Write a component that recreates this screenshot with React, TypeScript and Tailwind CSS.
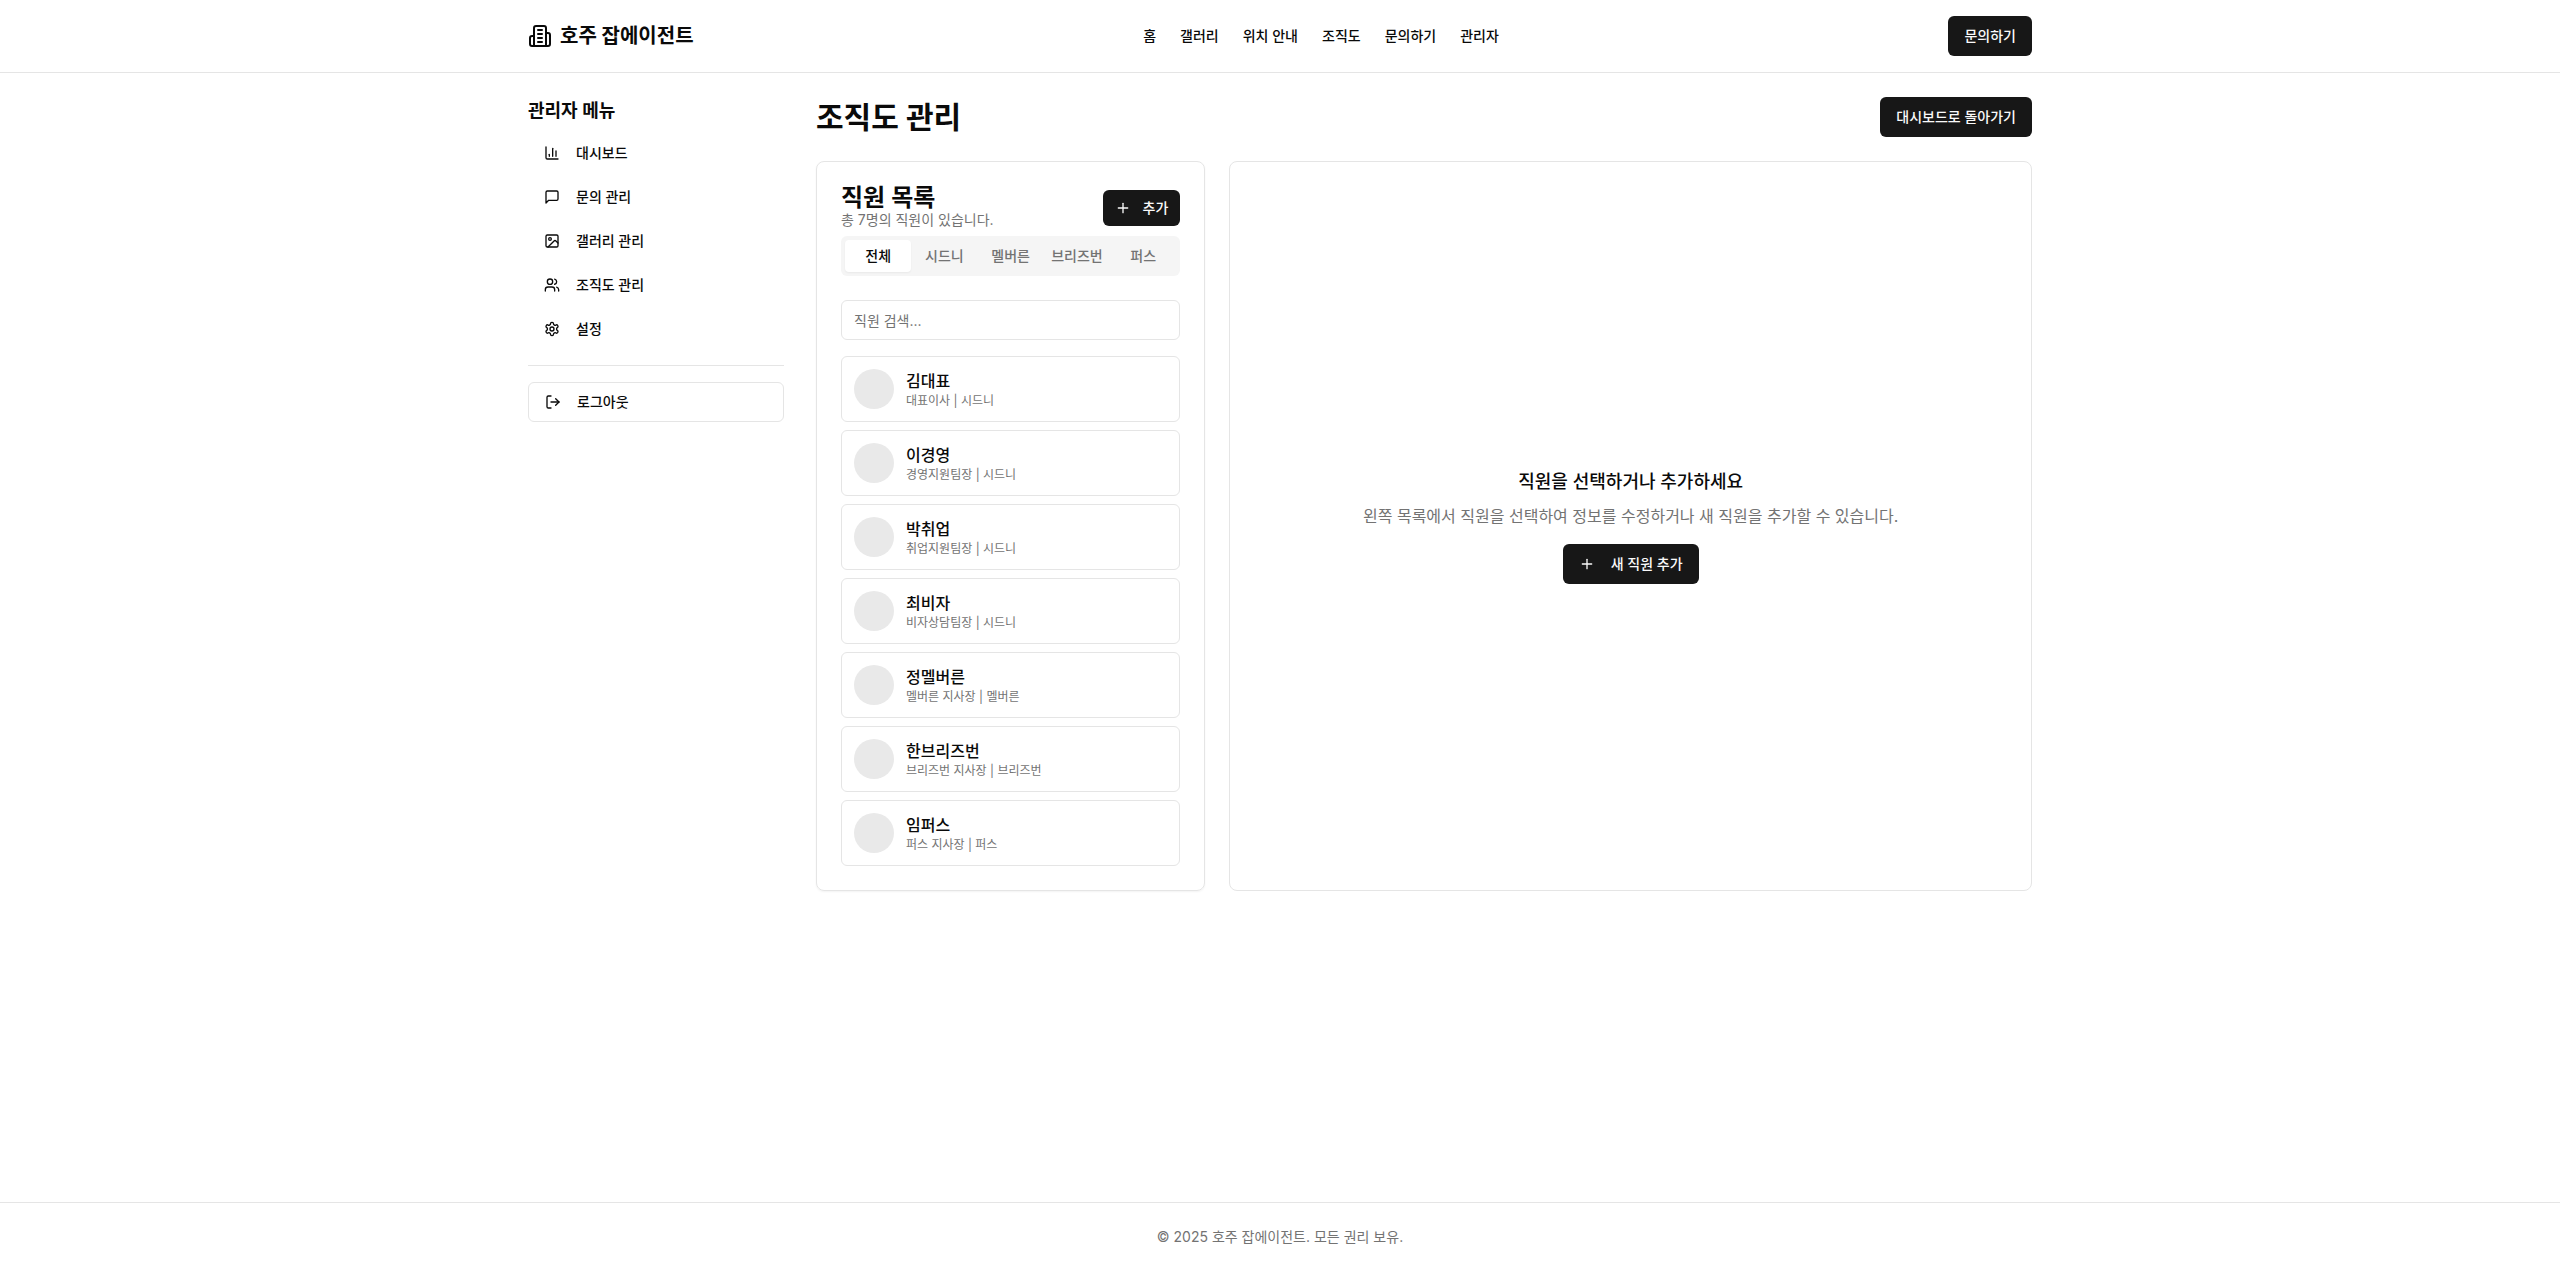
import { useState } from 'react';
import { ChartColumn, Image, LogOut, Plus, Users } from 'lucide-react';

type IconProps = { className?: string };

const BuildingIcon = ({ className }: IconProps) => (
  <svg
    className={className}
    viewBox="0 0 24 24"
    fill="none"
    stroke="currentColor"
    strokeWidth="2"
    strokeLinecap="round"
    strokeLinejoin="round"
    aria-hidden="true"
  >
    <path d="M6 22V4a2 2 0 0 1 2-2h8a2 2 0 0 1 2 2v18Z" />
    <path d="M6 12H4a2 2 0 0 0-2 2v6a2 2 0 0 0 2 2h2" />
    <path d="M18 9h2a2 2 0 0 1 2 2v9a2 2 0 0 1-2 2h-2" />
    <path d="M10 6h4" />
    <path d="M10 10h4" />
    <path d="M10 14h4" />
    <path d="M10 18h4" />
  </svg>
);

const MessageIcon = ({ className }: IconProps) => (
  <svg
    className={className}
    viewBox="0 0 24 24"
    fill="none"
    stroke="currentColor"
    strokeWidth="2"
    strokeLinecap="round"
    strokeLinejoin="round"
    aria-hidden="true"
  >
    <path d="M21 15a2 2 0 0 1-2 2H7l-4 4V5a2 2 0 0 1 2-2h14a2 2 0 0 1 2 2z" />
  </svg>
);

const GearIcon = ({ className }: IconProps) => (
  <svg
    className={className}
    viewBox="0 0 24 24"
    fill="none"
    stroke="currentColor"
    strokeWidth="2"
    strokeLinecap="round"
    strokeLinejoin="round"
    aria-hidden="true"
  >
    <path d="M12.22 2h-.44a2 2 0 0 0-2 2v.18a2 2 0 0 1-1 1.73l-.43.25a2 2 0 0 1-2 0l-.15-.08a2 2 0 0 0-2.73.73l-.22.38a2 2 0 0 0 .73 2.73l.15.1a2 2 0 0 1 1 1.72v.51a2 2 0 0 1-1 1.74l-.15.09a2 2 0 0 0-.73 2.73l.22.38a2 2 0 0 0 2.73.73l.15-.08a2 2 0 0 1 2 0l.43.25a2 2 0 0 1 1 1.73V20a2 2 0 0 0 2 2h.44a2 2 0 0 0 2-2v-.18a2 2 0 0 1 1-1.73l.43-.25a2 2 0 0 1 2 0l.15.08a2 2 0 0 0 2.73-.73l.22-.39a2 2 0 0 0-.73-2.73l-.15-.08a2 2 0 0 1-1-1.74v-.5a2 2 0 0 1 1-1.74l.15-.09a2 2 0 0 0 .73-2.73l-.22-.38a2 2 0 0 0-2.73-.73l-.15.08a2 2 0 0 1-2 0l-.43-.25a2 2 0 0 1-1-1.73V4a2 2 0 0 0-2-2z" />
    <circle cx="12" cy="12" r="3" />
  </svg>
);

const NAV_LINKS = ['홈', '갤러리', '위치 안내', '조직도', '문의하기', '관리자'];

const MENU_ITEMS = [
  { label: '대시보드', icon: ChartColumn },
  { label: '문의 관리', icon: MessageIcon },
  { label: '갤러리 관리', icon: Image },
  { label: '조직도 관리', icon: Users },
  { label: '설정', icon: GearIcon },
];

const BRANCHES = ['전체', '시드니', '멜버른', '브리즈번', '퍼스'];

const STAFF = [
  { name: '김대표', position: '대표이사', branch: '시드니' },
  { name: '이경영', position: '경영지원팀장', branch: '시드니' },
  { name: '박취업', position: '취업지원팀장', branch: '시드니' },
  { name: '최비자', position: '비자상담팀장', branch: '시드니' },
  { name: '정멜버른', position: '멜버른 지사장', branch: '멜버른' },
  { name: '한브리즈번', position: '브리즈번 지사장', branch: '브리즈번' },
  { name: '임퍼스', position: '퍼스 지사장', branch: '퍼스' },
];

function Header() {
  return (
    <header className="border-b border-[#e5e5e5]">
      <div className="max-w-[1536px] mx-auto px-4 h-18 flex items-center justify-between">
        <a href="#" className="flex items-center gap-2">
          <BuildingIcon className="w-6 h-6" />
          <span className="text-xl font-bold">호주 잡에이전트</span>
        </a>
        <nav className="flex items-center gap-6">
          {NAV_LINKS.map((link) => (
            <a key={link} href="#" className="text-sm font-medium">
              {link}
            </a>
          ))}
        </nav>
        <button className="h-10 px-4 rounded-md bg-[#171717] text-[#fafafa] text-sm font-medium">
          문의하기
        </button>
      </div>
    </header>
  );
}

function Sidebar() {
  return (
    <aside className="w-64 shrink-0">
      <h2 className="text-lg font-semibold mb-2">관리자 메뉴</h2>
      <nav className="flex flex-col gap-1">
        {MENU_ITEMS.map(({ label, icon: Icon }) => (
          <a
            key={label}
            href="#"
            className="h-10 px-4 flex items-center gap-4 rounded-md text-sm font-medium hover:bg-neutral-100"
          >
            <Icon className="w-4 h-4" />
            {label}
          </a>
        ))}
      </nav>
      <hr className="my-4 border-[#e5e5e5]" />
      <button className="w-full h-10 px-4 flex items-center gap-4 rounded-md border border-[#e5e5e5] text-sm font-medium">
        <LogOut className="w-4 h-4" />
        로그아웃
      </button>
    </aside>
  );
}

function StaffList() {
  const [branch, setBranch] = useState('전체');
  const [search, setSearch] = useState('');

  const visible = STAFF.filter(
    (s) => (branch === '전체' || s.branch === branch) && s.name.includes(search)
  );

  return (
    <section className="rounded-lg border border-[#e5e5e5] shadow-xs p-6">
      <div className="flex items-center justify-between mb-1.5">
        <div>
          <h2 className="text-2xl leading-6 font-semibold">직원 목록</h2>
          <p className="text-sm text-[#737373]">총 {STAFF.length}명의 직원이 있습니다.</p>
        </div>
        <button className="h-9 px-3 flex items-center gap-3 rounded-md bg-[#171717] text-[#fafafa] text-sm font-medium">
          <Plus className="w-4 h-4" />
          추가
        </button>
      </div>

      <div role="tablist" className="h-10 p-1 grid grid-cols-5 rounded-md bg-[#f5f5f5] mb-6">
        {BRANCHES.map((b) => (
          <button
            key={b}
            role="tab"
            aria-selected={b === branch}
            onClick={() => setBranch(b)}
            className={`rounded-sm text-sm font-medium whitespace-nowrap ${
              b === branch ? 'bg-white text-[#0a0a0a] shadow-xs' : 'text-[#737373]'
            }`}
          >
            {b}
          </button>
        ))}
      </div>

      <input
        type="text"
        aria-label="직원 검색"
        placeholder="직원 검색..."
        value={search}
        onChange={(e) => setSearch(e.target.value)}
        className="w-full h-10 px-3 mb-4 rounded-md border border-[#e5e5e5] text-sm placeholder:text-[#737373]"
      />

      <ul className="flex flex-col gap-2">
        {visible.map((s) => (
          <li key={s.name}>
            <button className="w-full p-3 flex items-center gap-3 rounded-md border border-[#e5e5e5] text-left">
              <span className="w-10 h-10 shrink-0 rounded-full bg-[#e9e9e9]" />
              <span className="flex flex-col">
                <span className="text-base font-medium">{s.name}</span>
                <span className="text-xs text-[#737373]">
                  {s.position} | {s.branch}
                </span>
              </span>
            </button>
          </li>
        ))}
      </ul>
    </section>
  );
}

function EmptyPanel() {
  return (
    <section className="col-span-2 rounded-lg border border-[#e5e5e5] flex flex-col items-center justify-center">
      <h3 className="text-lg font-medium mb-2">직원을 선택하거나 추가하세요</h3>
      <p className="text-base text-[#737373] mb-4">
        왼쪽 목록에서 직원을 선택하여 정보를 수정하거나 새 직원을 추가할 수 있습니다.
      </p>
      <button className="h-10 px-4 flex items-center gap-4 rounded-md bg-[#171717] text-[#fafafa] text-sm font-medium">
        <Plus className="w-4 h-4" />
        새 직원 추가
      </button>
    </section>
  );
}

export default function App() {
  return (
    <div className="min-h-screen flex flex-col bg-white text-[#0a0a0a] font-['Inter','Noto_Sans_CJK_KR',sans-serif]">
      <Header />

      <div className="flex-1 w-full max-w-[1536px] mx-auto px-4 py-6 flex items-start gap-8">
        <Sidebar />
        <main className="flex-1">
          <div className="flex items-center justify-between mb-6">
            <h1 className="text-3xl font-bold">조직도 관리</h1>
            <button className="h-10 px-4 rounded-md bg-[#171717] text-[#fafafa] text-sm font-medium">
              대시보드로 돌아가기
            </button>
          </div>
          <div className="grid grid-cols-3 gap-6">
            <StaffList />
            <EmptyPanel />
          </div>
        </main>
      </div>

      <footer className="border-t border-[#e5e5e5] py-6 text-center text-sm text-[#737373]">
        © 2025 호주 잡에이전트. 모든 권리 보유.
      </footer>
    </div>
  );
}
